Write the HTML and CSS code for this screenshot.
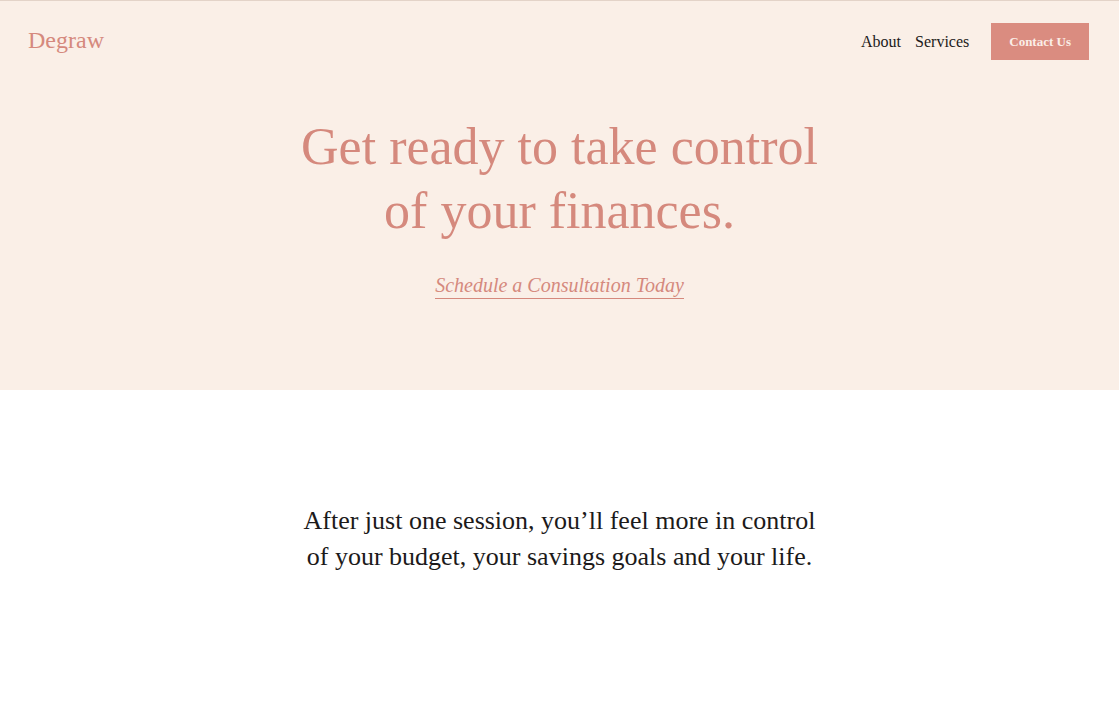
FILE: index.html
```html
<!DOCTYPE html>
<html lang="en">
<head>
<meta charset="utf-8">
<meta name="viewport" content="width=device-width, initial-scale=1">
<title>Degraw</title>
<link rel="stylesheet" href="styles.css">
</head>
<body>
<div class="banner">
  <header class="site-header">
    <a class="brand" href="#">Degraw</a>
    <nav class="nav">
      <a class="nav-link" href="#">About</a>
      <a class="nav-link" href="#">Services</a>
      <button class="contact" type="button">Contact Us</button>
    </nav>
  </header>
  <section class="hero">
    <h1 class="hero-title">Get ready to take control<br>of your finances.</h1>
    <a class="hero-link" href="#">Schedule a Consultation Today</a>
  </section>
</div>
<main class="intro">
  <p class="intro-text">After just one session, you’ll feel more in control<br>of your budget, your savings goals and your life.</p>
</main>
</body>
</html>
```

FILE: styles.css
```css
* {
  box-sizing: border-box;
}

body {
  margin: 0;
  background: #ffffff;
  color: #1c1a1a;
  font-family: "Liberation Serif", "Times New Roman", serif;
}

a {
  color: inherit;
  text-decoration: none;
}

.banner {
  padding-bottom: 91px;
  border-top: 1px solid #e3d3c8;
  background: #faefe7;
  color: #d5897d;
}

.site-header {
  display: flex;
  align-items: flex-start;
  justify-content: space-between;
  padding: 22px 30px 0 28px;
}

.brand {
  font-size: 24px;
  line-height: 34px;
}

.nav {
  display: flex;
  align-items: center;
  gap: 14px;
  color: #1c1a1a;
}

.nav-link {
  font-size: 16px;
  line-height: 24px;
}

.contact {
  margin-left: 8px;
  padding: 10px 18px;
  border: 0;
  background: #da8c80;
  color: #fbeee7;
  font-family: inherit;
  font-size: 13px;
  font-weight: 700;
  line-height: 17px;
}

.hero {
  display: flex;
  flex-direction: column;
  align-items: center;
  padding-top: 55px;
  text-align: center;
}

.hero-title {
  margin: 0 0 29px;
  font-size: 52px;
  font-weight: 400;
  line-height: 64px;
}

.hero-link {
  border-bottom: 1px solid;
  font-size: 20px;
  font-style: italic;
  line-height: 26px;
}

.intro {
  padding: 113px 30px;
  text-align: center;
}

.intro-text {
  margin: 0;
  font-size: 26px;
  line-height: 36px;
}
```
